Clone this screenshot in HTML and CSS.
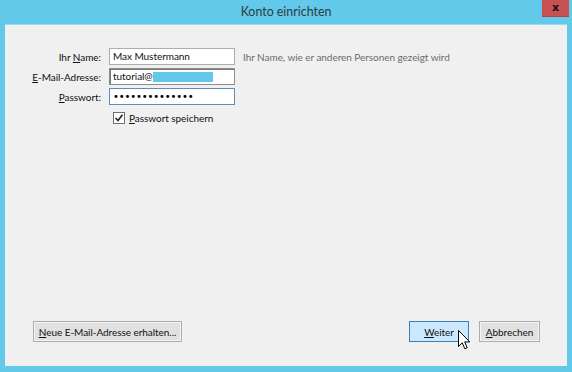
FILE: index.html
```html
<!DOCTYPE html>
<html>
<head>
    <title>Konto einrichten</title>
    <link rel="stylesheet" href="styles.css">
</head>
<body>
    <div class="window">
        <div class="titlebar">
            <span class="title">Konto einrichten</span>
            <span class="close-btn">x</span>
        </div>

        <div class="content">
            <div class="form">
                <span class="label">Ihr <u>N</u>ame:</span>
                <span class="field">Max Mustermann</span>
                <span class="hint">Ihr Name, wie er anderen Personen gezeigt wird</span>

                <span class="label"><u>E</u>-Mail-Adresse:</span>
                <span class="field field-active">tutorial@<span class="redacted"></span></span>
                <span></span>

                <span class="label"><u>P</u>asswort:</span>
                <span class="field field-focus"><span class="dots">••••••••••••••</span></span>
                <span></span>

                <span></span>
                <label class="check-row">
                    <span class="checkbox">
                        <svg width="10" height="10" viewBox="0 0 10 10">
                            <path d="M1.5 5 L4 7.5 L8.5 1.8" fill="none" stroke="#222" stroke-width="1.6"/>
                        </svg>
                    </span>
                    <span><u>P</u>asswort speichern</span>
                </label>
                <span></span>
            </div>

            <div class="buttons">
                <button class="btn btn-wide"><u>N</u>eue E-Mail-Adresse erhalten...</button>
                <div class="button-group">
                    <button class="btn btn-default"><u>W</u>eiter</button>
                    <button class="btn"><u>A</u>bbrechen</button>
                </div>
            </div>

            <svg class="cursor" width="13" height="21" viewBox="0 0 13 21">
                <path d="M0.5 0.5 L0.5 16.5 L4.3 12.8 L6.8 18.8 L9.2 17.8 L6.7 11.9 L11.8 11.9 Z" fill="#fff" stroke="#000" stroke-width="1" stroke-linejoin="miter"/>
            </svg>
        </div>
    </div>
</body>
</html>
```

FILE: styles.css
```css
body {
    margin: 0;
    font-family: Lato, "Liberation Sans", sans-serif;
    font-size: 10px;
    letter-spacing: -0.05px;
    color: #111;
}

.window {
    width: 572px;
    height: 372px;
    background-color: #63c9ea;
    display: flex;
    flex-direction: column;
    position: relative;
}

.titlebar {
    height: 24px;
    display: flex;
    align-items: center;
    justify-content: center;
}

.title {
    font-size: 12.4px;
    letter-spacing: 0;
    color: #2b3a40;
    margin-top: -1px;
}

.close-btn {
    position: absolute;
    top: 0;
    right: 3px;
    width: 27px;
    height: 17px;
    background-color: #c75050;
    color: #111;
    font-family: "DejaVu Sans", sans-serif;
    font-weight: bold;
    font-size: 11px;
    line-height: 15px;
    text-align: center;
    box-shadow: inset 0 -1px 0 #b34444;
}

.content {
    flex: 1;
    margin: 0 5px 6px 5px;
    background-color: #f0f0f0;
    border-top: 1px solid #9fd8ee;
    display: flex;
    flex-direction: column;
    justify-content: space-between;
    position: relative;
}

.form {
    display: grid;
    grid-template-columns: 96px 126px 1fr;
    grid-auto-rows: 17px;
    column-gap: 8px;
    row-gap: 3px;
    margin-top: 23px;
    align-items: center;
}

.label {
    text-align: right;
}

.field {
    height: 17px;
    box-sizing: border-box;
    border: 1px solid #abadb3;
    background-color: white;
    padding: 0 3px;
    line-height: 15px;
    display: flex;
    align-items: center;
    white-space: nowrap;
    overflow: hidden;
}

.field-active {
    border-color: #8c8c8c;
    box-shadow: inset 1px 1px 0 #7a7a7a;
}

.field-focus {
    border-color: #5f8bbf;
}

.redacted {
    display: inline-block;
    width: 60px;
    height: 10px;
    background-color: #63c9ea;
}

.dots {
    font-family: "DejaVu Sans", sans-serif;
    font-size: 10px;
    letter-spacing: -0.15px;
    color: #000;
}

.hint {
    color: #6d6d6d;
    white-space: nowrap;
}

.check-row {
    grid-column: 2 / 4;
    display: flex;
    align-items: center;
    gap: 4px;
    padding-left: 4px;
    margin-top: 2px;
}

.checkbox {
    width: 10px;
    height: 10px;
    border: 1px solid #707070;
    background-color: white;
    display: flex;
}

.buttons {
    display: flex;
    justify-content: space-between;
    align-items: center;
    padding: 0 27px 24px 28px;
}

.button-group {
    display: flex;
    gap: 10px;
}

.btn {
    font-family: Lato, "Liberation Sans", sans-serif;
    font-size: 10px;
    letter-spacing: -0.05px;
    color: #111;
    height: 21px;
    width: 61px;
    padding: 0 2px;
    white-space: nowrap;
    background-color: #e1e1e1;
    border: 1px solid #adadad;
    box-shadow: inset 0 0 0 1px #f4f4f4;
}

.btn-wide {
    width: 149px;
}

.btn-default {
    background-color: #cce8ff;
    border-color: #3c7fb1;
    box-shadow: none;
    width: 60px;
}

.cursor {
    position: absolute;
    left: 453px;
    top: 305px;
}
```
